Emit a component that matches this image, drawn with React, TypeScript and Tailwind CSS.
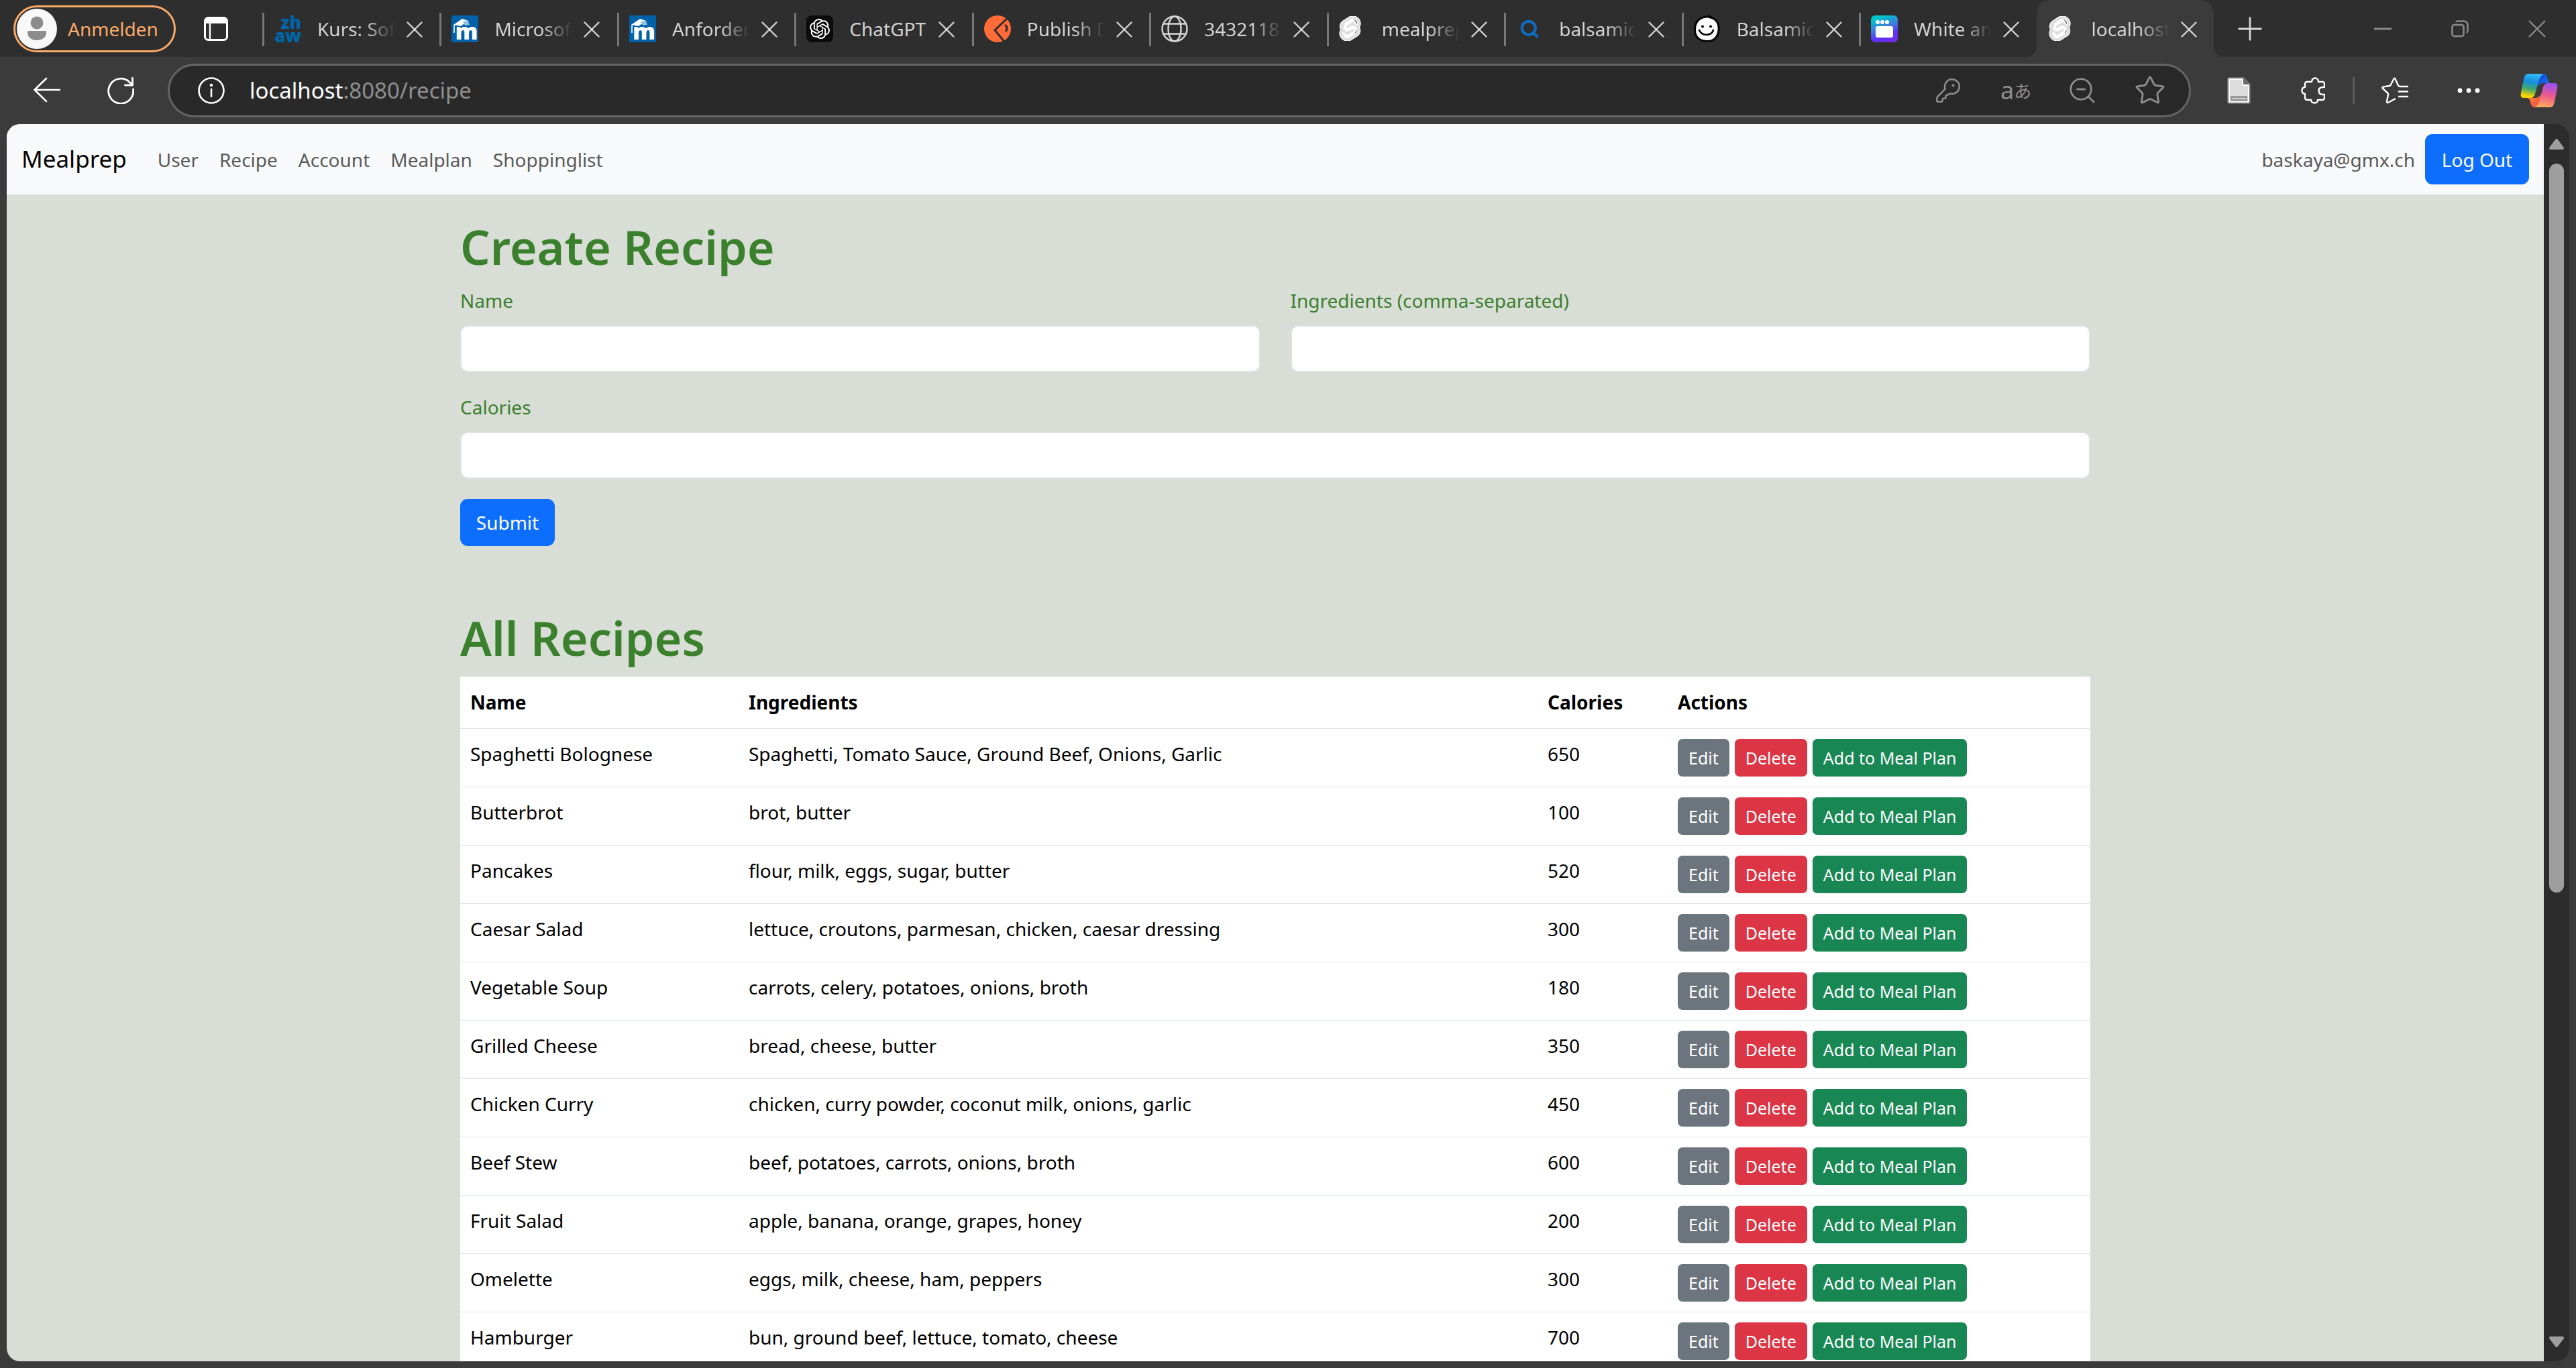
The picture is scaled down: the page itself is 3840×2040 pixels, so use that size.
import type { ReactNode } from "react";
import { KeyRound, Plus, Search, Star, X, ZoomOut } from "lucide-react";
import { SiOpenai, SiSvelte } from "react-icons/si";

function MoodleIcon() {
  return (
    <span className="relative flex size-10 items-end justify-center overflow-hidden bg-[#0061a8]">
      <span className="pl-1 text-[34px] leading-[34px] font-black text-white">m</span>
      <svg viewBox="0 0 40 40" className="absolute inset-0 size-10" aria-hidden="true">
        <path d="M3 14 L16 5 L25 8 L14 16 Z" fill="#fff" />
        <path d="M17 9 L25 8 L27 14 L20 15 Z" fill="#8fbfe4" />
        <path d="M4 14 V26" stroke="#cfe3f3" strokeWidth="2" />
      </svg>
    </span>
  );
}

function ZhawIcon() {
  return (
    <span className="flex size-10 flex-col items-end text-[26px] leading-5 font-black text-[#0064a6]">
      <span>zh</span>
      <span>aw</span>
    </span>
  );
}

function ChatIcon() {
  return (
    <span className="flex size-10 items-center justify-center rounded-lg bg-[#0b0b0b] text-white">
      <SiOpenai className="size-[30px]" />
    </span>
  );
}

function PostmanIcon() {
  return (
    <svg viewBox="0 0 40 40" className="size-10" aria-hidden="true">
      <circle cx="20" cy="20" r="20" fill="#ff6c37" />
      <path d="M36 3 L16 22 L30 39" fill="none" stroke="#2e2e2e" strokeWidth="3" />
      <path d="M31 14 C35 17 35 21 32 24" fill="none" stroke="#2e2e2e" strokeWidth="3" />
    </svg>
  );
}

function GlobeIcon() {
  return (
    <svg viewBox="0 0 40 40" className="size-10" fill="none" stroke="#d6d6d6" strokeWidth="2.4" aria-hidden="true">
      <circle cx="20" cy="20" r="18.5" />
      <ellipse cx="20" cy="20" rx="9.5" ry="18.5" />
      <path d="M3.5 12.5 H36.5 M3.5 27.5 H36.5" />
    </svg>
  );
}

function SvelteIcon() {
  return (
    <span className="relative flex size-10 items-center">
      <svg viewBox="0 0 40 40" className="absolute inset-0 size-10" aria-hidden="true">
        <ellipse cx="16" cy="20" rx="10" ry="15" fill="#fff" transform="rotate(18 16 20)" />
      </svg>
      <SiSvelte className="relative -ml-0.5 size-[37px] text-[#dadada]" stroke="#f4f4f4" strokeWidth="1" />
    </span>
  );
}

function SearchTabIcon() {
  return (
    <span className="flex size-10 items-center justify-center">
      <Search className="size-[30px] text-[#0f6cbd]" strokeWidth={3.4} />
    </span>
  );
}

function BalsamiqIcon() {
  return (
    <svg viewBox="0 0 40 40" className="size-10" aria-hidden="true">
      <path
        d="M20 2 C22 0 25 1 26 3 C34 6 38 13 37 22 C36 33 29 39 19 38.5 C7 38 1 31 1.500 20 C2 9 9 2 20 2 Z"
        fill="#fff"
        stroke="#050505"
        strokeWidth="3"
      />
      <path d="M20 1 C22 0 26 1 27 5 L22 4 Z" fill="#050505" />
      <circle cx="13" cy="16.500" r="2" fill="#050505" />
      <circle cx="25" cy="16.500" r="2" fill="#050505" />
      <path d="M8 22 C12 31 26 31 29 22" fill="none" stroke="#050505" strokeWidth="2.600" strokeLinecap="round" />
    </svg>
  );
}

function WindowTabIcon() {
  return (
    <span className="flex size-10 flex-col items-center gap-[3px] rounded-md bg-linear-[160deg,#00c4cc_15%,#3f7bdc_45%,#5a32fa_70%,#7d2ae8_100%] pt-[7px]">
      <span className="flex w-[26px] gap-px">
        <span className="size-[6px] rounded-full bg-white" />
        <span className="size-[6px] rounded-full bg-white" />
        <span className="size-[6px] rounded-full bg-white" />
      </span>
      <span className="h-[17px] w-[26px] rounded-[3px] bg-white" />
    </span>
  );
}

type TabInfo = { title: string; icon: ReactNode; active?: boolean };

const tabs: TabInfo[] = [
  { title: "Kurs: Sof", icon: <ZhawIcon /> },
  { title: "Microsof", icon: <MoodleIcon /> },
  { title: "Anforder", icon: <MoodleIcon /> },
  { title: "ChatGPT", icon: <ChatIcon /> },
  { title: "Publish D", icon: <PostmanIcon /> },
  { title: "3432118", icon: <GlobeIcon /> },
  { title: "mealprep", icon: <SvelteIcon /> },
  { title: "balsamiq", icon: <SearchTabIcon /> },
  { title: "Balsamiq", icon: <BalsamiqIcon /> },
  { title: "White an", icon: <WindowTabIcon /> },
  { title: "localhost", icon: <SvelteIcon />, active: true },
];

function Tab({ title, icon, active }: TabInfo) {
  const fades = title !== "ChatGPT";
  return (
    <div className={active ? "relative flex h-full min-w-0 flex-1 items-center rounded-t-[20px] bg-[#3b3b3b]" : "flex h-full min-w-0 flex-1 items-center"}>
      {active ? (
        <>
          <svg viewBox="0 0 16 16" className="absolute bottom-0 -left-4 size-4" aria-hidden="true">
            <path d="M16 0 V16 H0 C9 16 16 9 16 0 Z" fill="#3b3b3b" />
          </svg>
          <svg viewBox="0 0 16 16" className="absolute -right-4 bottom-0 size-4" aria-hidden="true">
            <path d="M0 0 V16 H16 C7 16 0 9 0 0 Z" fill="#3b3b3b" />
          </svg>
          <span className="w-[18px] shrink-0" />
        </>
      ) : (
        <span className="mt-0.5 mr-[15px] h-[50px] w-[3px] shrink-0 bg-[#777777]" />
      )}
      <span className="shrink-0">{icon}</span>
      <span
        className={
          fades
            ? "ml-6 w-[118px] shrink-0 overflow-hidden text-[28px] leading-10 whitespace-nowrap text-[#d2d2d2] [mask-image:linear-gradient(to_right,black_60%,transparent_98%)]"
            : "ml-6 w-[118px] shrink-0 text-[28px] leading-10 whitespace-nowrap text-[#d2d2d2]"
        }
      >
        {title}
      </span>
      <button type="button" aria-label={`Close ${title}`} className="mt-0.5 ml-1.5 text-[#d2d2d2]">
        <X className="size-[42px]" strokeWidth={1.4} />
      </button>
    </div>
  );
}

function TabStrip() {
  return (
    <header className="flex h-[85px] items-center bg-[#2e2e2e]">
      <div className="flex w-[391px] shrink-0 items-center pl-5">
        <button type="button" className="flex h-[70px] w-[242px] items-center gap-4 rounded-full border-[3px] border-[#fbaa68] pl-0.5 text-[28px] text-[#fbaa68]">
          <svg viewBox="0 0 60 60" className="size-[60px]" aria-hidden="true">
            <circle cx="30" cy="30" r="30" fill="#f8f8f8" />
            <circle cx="30" cy="21" r="9.500" fill="#8c8c8c" />
            <path d="M18 33 H42 Q44 33 44 35 C44 43 38 47 30 47 C22 47 16 43 16 35 Q16 33 18 33 Z" fill="#8c8c8c" />
          </svg>
          Anmelden
        </button>
        <button type="button" aria-label="Tab actions" className="ml-[42px]">
          <svg viewBox="0 0 36 36" className="size-9" aria-hidden="true">
            <rect x="1.500" y="1.500" width="33" height="33" rx="5" fill="none" stroke="#fff" strokeWidth="3" />
            <path d="M1 10 V6 Q1 1 6 1 H30 Q35 1 35 6 V10 Z" fill="#fff" />
            <path d="M9 8 V34" stroke="#fff" strokeWidth="2.400" />
          </svg>
        </button>
      </div>
      <div className="flex h-full min-w-0 flex-1 items-center">
        {tabs.map((tab, i) => (
          <Tab key={i} {...tab} />
        ))}
      </div>
      <div className="flex w-[540px] shrink-0 items-center text-[#8a8a8a]">
        <button type="button" aria-label="New tab" className="ml-[26px] text-[#d6d6d6]">
          <Plus className="size-[56px]" strokeWidth={1.200} />
        </button>
        <span className="flex-1" />
        <button type="button" aria-label="Minimize">
          <svg viewBox="0 0 26 26" className="size-[26px]" stroke="currentColor" strokeWidth="3" aria-hidden="true">
            <path d="M0 13 H26" />
          </svg>
        </button>
        <button type="button" aria-label="Restore" className="ml-[89px]">
          <svg viewBox="0 0 26 26" className="size-[26px]" fill="none" stroke="currentColor" strokeWidth="2.600" aria-hidden="true">
            <rect x="1.500" y="7" width="17" height="17" rx="3" />
            <path d="M7 3 Q8 1.500 10 1.500 H18 Q24.500 1.500 24.500 8 V16 Q24.500 18 23 19" />
          </svg>
        </button>
        <button type="button" aria-label="Close window" className="mr-[45px] ml-[89px]">
          <svg viewBox="0 0 26 26" className="size-[26px]" stroke="currentColor" strokeWidth="2.400" aria-hidden="true">
            <path d="M1 1 L25 25 M25 1 L1 25" />
          </svg>
        </button>
      </div>
    </header>
  );
}

function CopilotIcon() {
  return (
    <svg viewBox="0 0 56 50" className="h-[50px] w-14" aria-hidden="true">
      <defs>
        <linearGradient id="cp-left" x1="0.600" y1="0" x2="0.400" y2="1">
          <stop offset="0" stopColor="#35bdf6" />
          <stop offset="0.350" stopColor="#158fe0" />
          <stop offset="0.650" stopColor="#43a86c" />
          <stop offset="0.950" stopColor="#ffd200" />
        </linearGradient>
        <linearGradient id="cp-top" x1="0" y1="0" x2="1" y2="1">
          <stop offset="0" stopColor="#0b46d0" />
          <stop offset="1" stopColor="#1f77ee" />
        </linearGradient>
        <linearGradient id="cp-right" x1="0.600" y1="0" x2="0.400" y2="1">
          <stop offset="0" stopColor="#9b4ff2" />
          <stop offset="0.500" stopColor="#ee5a8c" />
          <stop offset="1" stopColor="#ffad5c" />
        </linearGradient>
        <linearGradient id="cp-bottom" x1="0" y1="0" x2="1" y2="1">
          <stop offset="0" stopColor="#ff9a3d" />
          <stop offset="1" stopColor="#ee3d3d" />
        </linearGradient>
      </defs>
      <path d="M30 0 H35 C39 0 40 4 41 8 C42 12 43 14 47 14 H36 C30 14 27 16 25 20 Z" fill="url(#cp-top)" />
      <path d="M26 50 H21 C17 50 16 46 15 42 C14 38 13 36 9 36 H20 C26 36 29 34 31 30 Z" fill="url(#cp-bottom)" />
      <path d="M12 0 H37 C32 0 29 5 27 12 L22 30 C21 34 18 36 15 36 H5 C1 36 0 33 1 28 L5 8 C6 3 8 0 12 0 Z" fill="url(#cp-left)" />
      <path d="M44 50 H19 C24 50 27 45 29 38 L34 20 C35 16 38 14 41 14 H51 C55 14 56 17 55 22 L51 42 C50 47 48 50 44 50 Z" fill="url(#cp-right)" />
    </svg>
  );
}

function Toolbar() {
  return (
    <div className="flex h-[100px] items-center bg-[#3b3b3b] text-white">
      <button type="button" aria-label="Back" className="ml-[50px]">
        <svg viewBox="0 0 40 40" className="size-10" fill="none" stroke="currentColor" strokeWidth="2.600" strokeLinecap="round" strokeLinejoin="round" aria-hidden="true">
          <path d="M39 19 H2 M19 2 L1.500 19 L19 36" />
        </svg>
      </button>
      <button type="button" aria-label="Refresh" className="ml-[70px]">
        <svg viewBox="0 0 40 40" className="size-10" fill="none" stroke="currentColor" strokeWidth="2.800" strokeLinecap="round" strokeLinejoin="round" aria-hidden="true">
          <path d="M38.500 18 A18.500 18.500 0 1 1 32 6.500 L37.500 12" />
          <path d="M37.500 1.500 V12 H26.500" />
        </svg>
      </button>
      <div className="ml-[50px] flex h-20 min-w-0 flex-1 items-center rounded-full border-[3px] border-[#656565] bg-[#292929] text-[#8f8f8f]">
        <button type="button" aria-label="Site information" className="ml-[42px] text-white">
          <svg viewBox="0 0 40 40" className="size-10" fill="none" stroke="currentColor" strokeWidth="2.600" strokeLinecap="round" aria-hidden="true">
            <circle cx="20" cy="20" r="18.500" />
            <path d="M20 18 V29" />
            <circle cx="20" cy="12" r="1" fill="currentColor" />
          </svg>
        </button>
        <div role="textbox" aria-label="Address" className="ml-[37px] flex-1 text-[33px] leading-10">
          <span className="text-white">localhost</span>:8080/recipe
        </div>
        <button type="button" aria-label="Passwords">
          <KeyRound className="size-10" strokeWidth={1.500} />
        </button>
        <button type="button" aria-label="Translate" className="ml-[58px] flex w-11 items-center leading-9">
          <span className="text-[36px] leading-9">a</span>
          <span className="font-['Noto_Sans_CJK_JP',sans-serif] text-[26px] leading-9">あ</span>
        </button>
        <button type="button" aria-label="Zoom out" className="ml-[55px]">
          <ZoomOut className="size-[46px]" strokeWidth={1.400} />
        </button>
        <button type="button" aria-label="Add to favourites" className="mr-[34px] ml-[54px]">
          <Star className="size-[48px]" strokeWidth={1.400} />
        </button>
      </div>
      <div className="flex w-[574px] shrink-0 items-center">
        <button type="button" aria-label="Document extension" className="ml-[54px]">
          <svg viewBox="0 0 36 40" className="h-10 w-9" aria-hidden="true">
            <path d="M3 0 H25 L35 10 V37 Q35 40 32 40 H3 Q0 40 0 37 V3 Q0 0 3 0 Z" fill="#6b6b6b" />
            <path d="M3 3 H23 V12 H32 V37 H3 Z" fill="#dcdcdc" stroke="#fff" strokeWidth="2" />
            <rect x="5" y="28" width="25" height="8" fill="#9a9a9a" />
            <path d="M8 32 H28" stroke="#d0d0d0" strokeWidth="2" />
          </svg>
        </button>
        <button type="button" aria-label="Extensions" className="ml-[74px]">
          <svg viewBox="0 0 36 40" className="h-10 w-9" fill="none" stroke="currentColor" strokeWidth="2.400" strokeLinejoin="round" aria-hidden="true">
            <path d="M6 10 a3 3 0 0 1 3-3 h7 c0-3 2-5.500 5-5.500 s5 2.500 5 5.500 h6 a3 3 0 0 1 3 3 v5 h-2 c-4 0-6.500 2-6.500 5.500 s2.500 5.500 6.500 5.500 h2 v5 a3 3 0 0 1-3 3 h-7 c0 3-2 4.500-5 4.500 s-5-1.500-5-4.500 h-6 a3 3 0 0 1-3-3 v-6 c-3 0-4.500-2-4.500-5 s1.500-5 4.500-5z" />
          </svg>
        </button>
        <span className="ml-[41px] h-10 w-[3px] bg-[#5c5c5c]" />
        <button type="button" aria-label="Favourites" className="ml-10">
          <svg viewBox="0 0 40 40" className="size-10" fill="none" stroke="currentColor" strokeWidth="2.400" strokeLinecap="round" strokeLinejoin="round" aria-hidden="true">
            <path d="M39 14 H28 Q26 14 25 12.500 L20.500 2.500 Q19.500 1 18.500 2.500 L13.500 12 Q13 13 12 13 L2.500 14.500 Q0.500 15.500 2 17 L9.500 24 Q10.500 25 10 26 L8 36.500 Q8 39 10 38 L20 32.500" />
            <path d="M26 21.500 H39 M26 29 H39" />
          </svg>
        </button>
        <button type="button" aria-label="Settings and more" className="ml-[73px]">
          <svg viewBox="0 0 34 8" className="h-2 w-[34px]" fill="currentColor" aria-hidden="true">
            <circle cx="4" cy="4" r="3.400" />
            <circle cx="17" cy="4" r="3.400" />
            <circle cx="30" cy="4" r="3.400" />
          </svg>
        </button>
        <button type="button" aria-label="Copilot" className="ml-[60px]">
          <CopilotIcon />
        </button>
      </div>
    </div>
  );
}

const links = ["User", "Recipe", "Account", "Mealplan", "Shoppinglist"];

const recipes = [
  ["Spaghetti Bolognese", "Spaghetti, Tomato Sauce, Ground Beef, Onions, Garlic", "650"],
  ["Butterbrot", "brot, butter", "100"],
  ["Pancakes", "flour, milk, eggs, sugar, butter", "520"],
  ["Caesar Salad", "lettuce, croutons, parmesan, chicken, caesar dressing", "300"],
  ["Vegetable Soup", "carrots, celery, potatoes, onions, broth", "180"],
  ["Grilled Cheese", "bread, cheese, butter", "350"],
  ["Chicken Curry", "chicken, curry powder, coconut milk, onions, garlic", "450"],
  ["Beef Stew", "beef, potatoes, carrots, onions, broth", "600"],
  ["Fruit Salad", "apple, banana, orange, grapes, honey", "200"],
  ["Omelette", "eggs, milk, cheese, ham, peppers", "300"],
  ["Hamburger", "bun, ground beef, lettuce, tomato, cheese", "700"],
];

function Navbar() {
  return (
    <nav className="flex h-[105px] items-center bg-[#f8f9fa] px-[22px] text-[28px] text-[#595a5a]">
      <a href="#" className="mr-[46px] text-[35px] text-black">
        Mealprep
      </a>
      <div className="flex flex-1 gap-[31px]">
        {links.map((l) => (
          <a key={l} href="#">
            {l}
          </a>
        ))}
      </div>
      <span>baskaya@gmx.ch</span>
      <button type="button" className="ml-[15px] h-[75px] w-[155px] rounded-[11px] bg-[#0d6efd] text-white">
        Log Out
      </button>
    </nav>
  );
}

function Field({ id, label, wide }: { id: string; label: string; wide?: boolean }) {
  return (
    <div className={wide ? "col-span-2" : ""}>
      <label htmlFor={id} className="mb-3.5 block leading-[45px]">
        {label}
      </label>
      <input id={id} type="text" className="block h-[70px] w-full rounded-[11px] border-2 border-[#dee2e6] bg-white px-5 text-black" />
    </div>
  );
}

function RecipeTable() {
  return (
    <table className="w-full table-fixed border-collapse bg-white text-left text-black">
      <colgroup>
        <col className="w-[415px]" />
        <col />
        <col className="w-[194px]" />
        <col className="w-[630px]" />
      </colgroup>
      <thead>
        <tr className="h-[77px] border-b border-[#dee2e6] align-top leading-[45px]">
          {["Name", "Ingredients", "Calories", "Actions"].map((h) => (
            <th key={h} scope="col" className="px-[15px] pt-4 font-bold">
              {h}
            </th>
          ))}
        </tr>
      </thead>
      <tbody>
        {recipes.map(([name, ingredients, calories]) => (
          <tr key={name} className="border-b border-[#dee2e6] align-top leading-[45px]">
            <td className="px-[15px] pt-[15px]">{name}</td>
            <td className="px-[15px] pt-[15px]">{ingredients}</td>
            <td className="px-[15px] pt-[15px]">{calories}</td>
            <td className="p-[15px]">
              <div className="flex gap-2 text-[25px] leading-10 text-white">
                <button type="button" className="h-14 rounded-[7px] bg-[#6c757d] px-4">
                  Edit
                </button>
                <button type="button" className="h-14 rounded-[7px] bg-[#dc3545] px-4">
                  Delete
                </button>
                <button type="button" className="h-14 rounded-[7px] bg-[#198754] px-4">
                  Add to Meal Plan
                </button>
              </div>
            </td>
          </tr>
        ))}
      </tbody>
    </table>
  );
}

function Scrollbar() {
  return (
    <div className="flex w-[38px] shrink-0 flex-col items-center bg-[#2c2c2c] pt-[21px] pb-5" aria-hidden="true">
      <svg viewBox="0 0 24 18" className="h-[18px] w-6" fill="#9e9e9e" stroke="#9e9e9e" strokeWidth="4" strokeLinejoin="round">
        <path d="M12 3 L21 15 H3 Z" />
      </svg>
      <span className="mt-5 h-[1087px] w-[22px] rounded-full bg-[#9e9e9e]" />
      <span className="flex-1" />
      <svg viewBox="0 0 24 18" className="h-[18px] w-6" fill="#9e9e9e" stroke="#9e9e9e" strokeWidth="4" strokeLinejoin="round">
        <path d="M12 15 L21 3 H3 Z" />
      </svg>
    </div>
  );
}

export default function App() {
  return (
    <div className="flex h-screen flex-col overflow-hidden bg-[#3b3b3b] font-['Noto_Sans','Noto_Sans_CJK_JP',sans-serif]">
      <TabStrip />
      <Toolbar />
      <div className="mx-2.5 mb-2.5 flex min-h-0 flex-1 overflow-hidden rounded-[20px]">
        <div className="min-w-0 flex-1 overflow-hidden bg-[#d8ddd6]">
          <Navbar />
          <main className="mx-auto max-w-[2430px] pt-[33px] text-[28px] text-[#3b802d]">
            <h1 className="mb-[13px] text-[70px] leading-[90px] font-semibold">Create Recipe</h1>
            <form>
              <div className="grid grid-cols-2 gap-x-[45px] gap-y-[30px]">
                <Field id="name" label="Name" />
                <Field id="ingredients" label="Ingredients (comma-separated)" />
                <Field id="calories" label="Calories" wide />
              </div>
              <button type="button" className="mt-[30px] block h-[70px] w-[141px] rounded-[11px] bg-[#0d6efd] text-white">
                Submit
              </button>
            </form>
            <h1 className="mt-[92px] mb-[13px] text-[70px] leading-[90px] font-semibold">All Recipes</h1>
            <RecipeTable />
          </main>
        </div>
        <Scrollbar />
      </div>
    </div>
  );
}
